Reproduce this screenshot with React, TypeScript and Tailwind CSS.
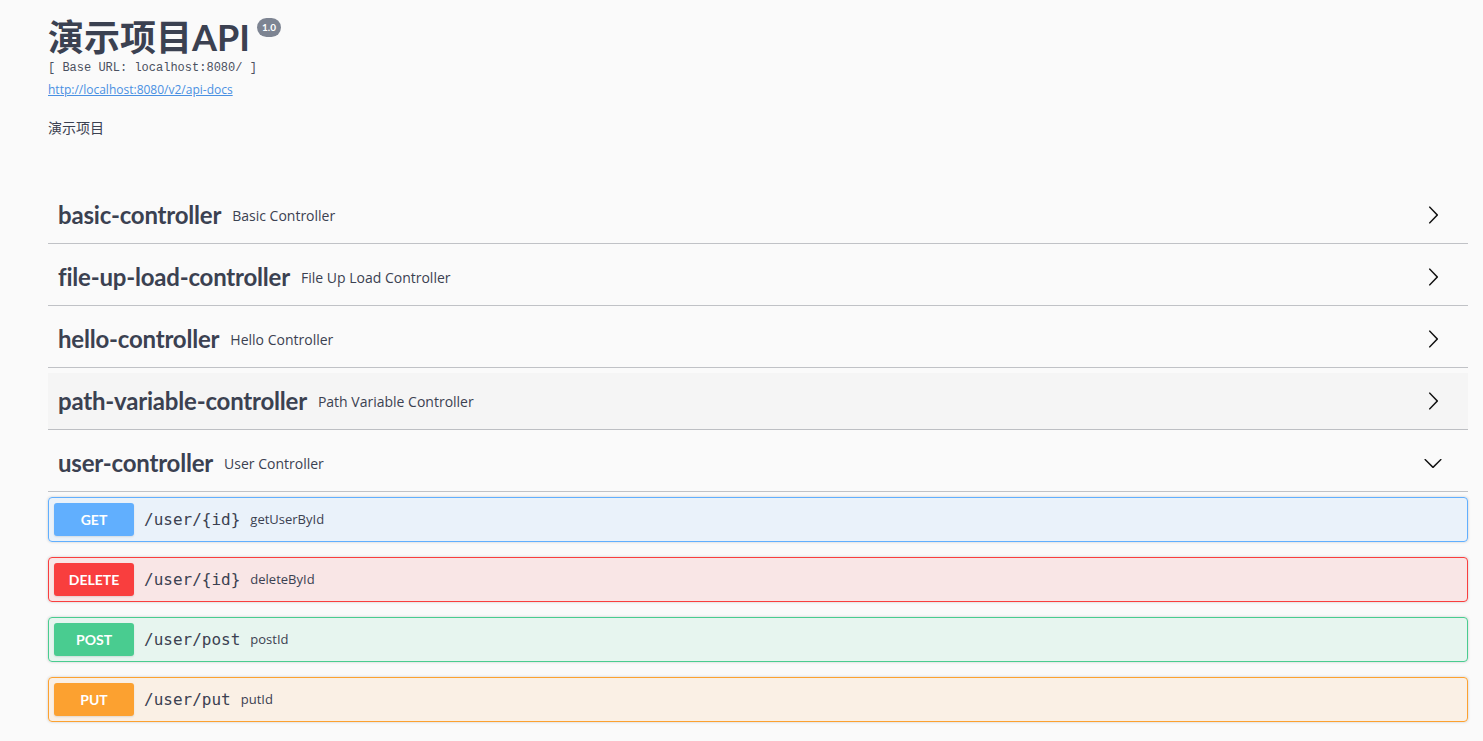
import React from 'react';

const tags = [
  { name: 'basic-controller', desc: 'Basic Controller' },
  { name: 'file-up-load-controller', desc: 'File Up Load Controller' },
  { name: 'hello-controller', desc: 'Hello Controller' },
  { name: 'path-variable-controller', desc: 'Path Variable Controller', hover: true },
];

const ops = [
  {
    method: 'GET',
    path: '/user/{id}',
    desc: 'getUserById',
    box: 'border-[#61affe] bg-[rgba(97,175,254,0.1)]',
    badge: 'bg-[#61affe]',
  },
  {
    method: 'DELETE',
    path: '/user/{id}',
    desc: 'deleteById',
    box: 'border-[#f93e3e] bg-[rgba(249,62,62,0.1)]',
    badge: 'bg-[#f93e3e]',
  },
  {
    method: 'POST',
    path: '/user/post',
    desc: 'postId',
    box: 'border-[#49cc90] bg-[rgba(73,204,144,0.1)]',
    badge: 'bg-[#49cc90]',
  },
  {
    method: 'PUT',
    path: '/user/put',
    desc: 'putId',
    box: 'border-[#fca130] bg-[rgba(252,161,48,0.1)]',
    badge: 'bg-[#fca130]',
  },
];

const ArrowRight = () => (
  <svg width="20" height="20" viewBox="0 0 20 20" className="mr-[25px] fill-[#111]">
    <path d="M13.25 10L6.109 2.58c-.268-.27-.268-.707 0-.979.268-.27.701-.27.969 0l7.83 7.908c.268.271.268.709 0 .979l-7.83 7.908c-.268.271-.701.27-.969 0-.268-.269-.268-.707 0-.979L13.25 10z" />
  </svg>
);

const ArrowDown = () => (
  <svg width="20" height="20" viewBox="0 0 20 20" className="mr-[25px] fill-[#111]">
    <path d="M17.418 6.109c.272-.268.709-.268.979 0s.271.701 0 .969l-7.908 7.83c-.27.268-.707.268-.979 0l-7.908-7.83c-.27-.268-.27-.701 0-.969.271-.268.709-.268.979 0L10 13.25l7.418-7.141z" />
  </svg>
);

const TagRow = ({ name, desc, hover, open }: { name: string; desc: string; hover?: boolean; open?: boolean }) => (
  <div
    className={
      'flex items-center h-[57px] pl-[10px] mb-[5px] border-b border-[rgba(59,65,81,0.3)] ' +
      (hover ? 'bg-[rgba(0,0,0,0.02)]' : '')
    }
  >
    <span className="font-['Lato',sans-serif] font-bold text-[24px] tracking-[-0.2px] leading-none text-[#3b4151]">
      {name}
    </span>
    <span className="ml-[11px] font-['Open_Sans',sans-serif] text-[14px] text-[#3b4151]">{desc}</span>
    <div className="flex-1" />
    {open ? <ArrowDown /> : <ArrowRight />}
  </div>
);

export default function App() {
  return (
    <div className="min-h-screen bg-[#fafafa] pl-[48px] pr-[15px] pt-[17px] pb-[20px] text-[#3b4151]">
      {/* info */}
      <div>
        <div className="flex items-start">
          <h2 className="font-['Lato','Noto_Sans_CJK_SC',sans-serif] font-bold text-[36px] leading-[40px] text-[#3b4151]">
            演示项目API
          </h2>
          <span className="ml-[7px] mt-[1px] rounded-full bg-[#7d8492] px-[5px] h-[19px] flex items-center font-['Lato',sans-serif] font-bold text-[10px] text-white">
            1.0
          </span>
        </div>
        <div className="mt-[3px] h-[16px] leading-[16px] font-['Liberation_Mono',monospace] text-[12px] text-[#4a5060]">
          [ Base URL: localhost:8080/ ]
        </div>
        <div className="mt-[4px] h-[16px] leading-[16px]">
          <a className="font-['Open_Sans',sans-serif] text-[12px] text-[#4990e2] underline">
            http://localhost:8080/v2/api-docs
          </a>
        </div>
        <p className="mt-[22px] leading-[20px] font-['Open_Sans','Noto_Sans_CJK_SC',sans-serif] text-[14px] text-[#3b4151]">
          演示项目
        </p>
      </div>

      {/* tags */}
      <div className="mt-[49px]">
        {tags.map((t) => (
          <TagRow key={t.name} name={t.name} desc={t.desc} hover={t.hover} />
        ))}
        <TagRow name="user-controller" desc="User Controller" open />
        <div>
          {ops.map((op, i) => (
            <div
              key={i}
              className={'mb-[15px] h-[45px] flex items-center p-[5px] border rounded-[4px] shadow-[0_0_3px_rgba(0,0,0,0.19)] ' + op.box}
            >
              <div
                className={
                  'w-[80px] h-[33px] rounded-[3px] flex items-center justify-center font-["Lato",sans-serif] font-bold text-[14px] text-white shadow-[0_1px_2px_rgba(0,0,0,0.1)] ' +
                  op.badge
                }
              >
                {op.method}
              </div>
              <span className="px-[10px] pt-[1px] font-['DejaVu_Sans_Mono',monospace] text-[16px] text-[#3b4151]">{op.path}</span>
              <span className="pt-[1px] font-['Open_Sans',sans-serif] text-[13px] text-[#3b4151]">{op.desc}</span>
            </div>
          ))}
        </div>
      </div>
    </div>
  );
}
